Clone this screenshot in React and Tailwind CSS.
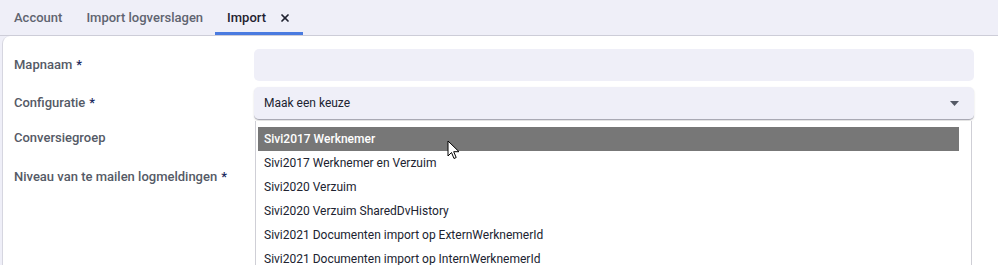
import { X } from 'lucide-react';

const options = [
  'Sivi2017 Werknemer',
  'Sivi2017 Werknemer en Verzuim',
  'Sivi2020 Verzuim',
  'Sivi2020 Verzuim SharedDvHistory',
  'Sivi2021 Documenten import op ExternWerknemerId',
  'Sivi2021 Documenten import op InternWerknemerId',
];

function Label({ children, required }) {
  return (
    <div className="w-[240px] shrink-0 text-[13px] font-medium text-[#555a66]">
      {children}
      {required && <span className="ml-1 text-[#1b2a5e]">*</span>}
    </div>
  );
}

function App() {
  return (
    <div className="h-[265px] w-[998px] overflow-hidden bg-[#efeff8] font-['Roboto',sans-serif]">
      <div className="flex h-[36px] items-stretch border-b border-[#cdcdd8] pl-[2px]">
        <div className="flex items-center px-3 text-[13px] font-medium text-[#5f6470]">Account</div>
        <div className="flex items-center px-3 text-[13px] font-medium text-[#5f6470]">Import logverslagen</div>
        <div className="flex items-center gap-[13px] border-b-[3px] border-[#4a7be0] px-3 pt-[3px] text-[13px] font-medium text-[#1f2230]">
          Import
          <X className="h-[12px] w-[12px] text-[#1f2230]" strokeWidth={3.5} />
        </div>
      </div>

      <div className="relative ml-[2px] h-full rounded-tl-[8px] border-l border-[#d6d6e0] bg-white pl-[11px] pt-[13px]">
        <div className="flex h-[32px] items-center">
          <Label required>Mapnaam</Label>
          <div className="h-[32px] w-[720px] rounded-[5px] bg-[#efeff8]" />
        </div>

        <div className="mt-[6px] flex h-[34px] items-start">
          <div className="flex h-[32px] items-center">
            <Label required>Configuratie</Label>
          </div>
          <div className="w-[720px]">
            <div className="flex h-[33px] items-center justify-between rounded-[5px] border-b border-[#a9a9b4] bg-[#efeff8] pl-[10px] pr-[15px] text-[12px] text-[#202330] shadow-[0_1px_2px_rgba(0,0,0,0.15)]">
              Maak een keuze
              <svg width="9" height="5" viewBox="0 0 9 5">
                <path d="M0 0h9L4.5 5z" fill="#555a66" />
              </svg>
            </div>
            <div className="ml-[1px] mr-[2px] mt-[1px] border-x border-[#cfcfd6] bg-white pb-2 pl-[2px] pr-[12px] pt-[6px]">
              {options.map((o, i) => (
                <div
                  key={o}
                  className={
                    i === 0
                      ? 'flex h-[24px] items-center bg-[#777777] px-[6px] text-[12px] font-medium text-white'
                      : 'flex h-[24px] items-center px-[6px] text-[12px] text-[#202330]'
                  }
                >
                  {o}
                </div>
              ))}
            </div>
          </div>
        </div>

        <div className="absolute left-[11px] top-[92px]">
          <Label>Conversiegroep</Label>
        </div>
        <div className="absolute left-[11px] top-[131px]">
          <Label required>Niveau van te mailen logmeldingen</Label>
        </div>

        <svg className="absolute left-[444px] top-[104px]" width="14" height="20" viewBox="0 0 14 20">
          <path d="M1 1v15l3.5-3.5 2.5 6 2.2-1-2.5-5.8H12z" fill="#fff" stroke="#000" strokeWidth="1" strokeLinejoin="round" />
        </svg>
      </div>
    </div>
  );
}

export default App;
